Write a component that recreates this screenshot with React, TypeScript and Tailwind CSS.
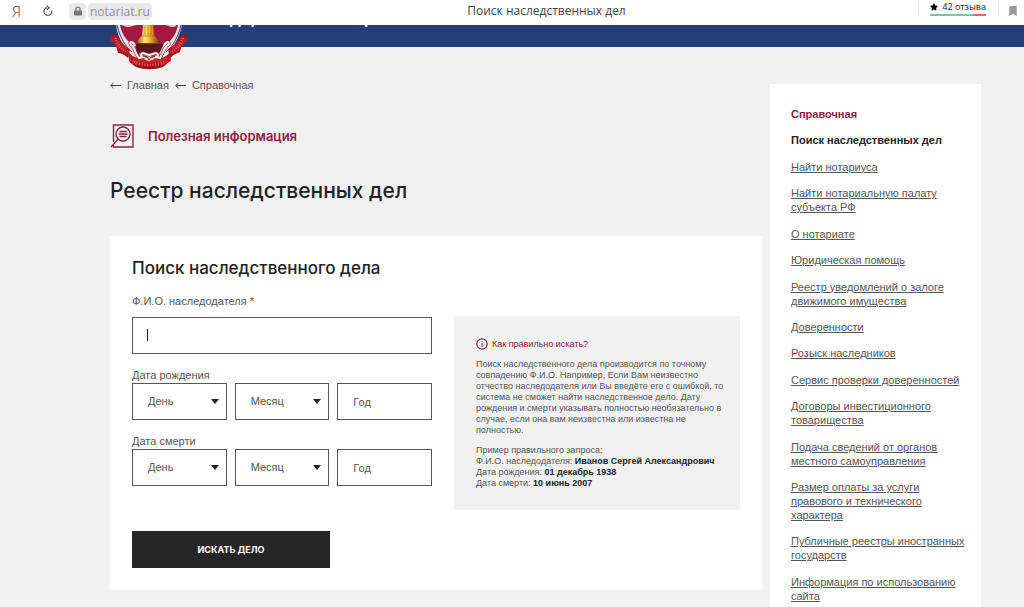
import React from 'react';
import { FaBookmark, FaLock, FaStar } from 'react-icons/fa';

interface NavItem {
  lines: string[];
}

const navItems: NavItem[] = [
  { lines: ['Найти нотариуса'] },
  { lines: ['Найти нотариальную палату', 'субъекта РФ'] },
  { lines: ['О нотариате'] },
  { lines: ['Юридическая помощь'] },
  { lines: ['Реестр уведомлений о залоге', 'движимого имущества'] },
  { lines: ['Доверенности'] },
  { lines: ['Розыск наследников'] },
  { lines: ['Сервис проверки доверенностей'] },
  { lines: ['Договоры инвестиционного', 'товарищества'] },
  { lines: ['Подача сведений от органов', 'местного самоуправления'] },
  { lines: ['Размер оплаты за услуги', 'правового и технического', 'характера'] },
  { lines: ['Публичные реестры иностранных', 'государств'] },
  { lines: ['Информация по использованию', 'сайта'] },
];

const Lines: React.FC<{ lines: string[] }> = ({ lines }) => (
  <>
    {lines.map((line, i) => (
      <React.Fragment key={line}>
        {i > 0 && <br />}
        {line}
      </React.Fragment>
    ))}
  </>
);

const Emblem: React.FC = () => (
  <svg viewBox="0 0 78 45" className="absolute left-[110px] top-0 h-[45px] w-[78px]" aria-hidden="true">
    <defs>
      <linearGradient id="gold" x1="0" x2="1">
        <stop offset="0" stopColor="#a86a10" />
        <stop offset="0.35" stopColor="#ffe87a" />
        <stop offset="0.6" stopColor="#f3b32c" />
        <stop offset="1" stopColor="#8a4c0c" />
      </linearGradient>
      <linearGradient id="ribbon" x1="0" x2="0" y1="0" y2="1">
        <stop offset="0" stopColor="#9c121c" />
        <stop offset="0.5" stopColor="#cb2029" />
        <stop offset="1" stopColor="#8f0f18" />
      </linearGradient>
    </defs>
    {/* shield */}
    <path d="M6 0C8 14 15 26 26 33H50C62 26 69 14 72 0Z" fill="#e8dde2" />
    <path d="M7 0C10 13 16 22 22 27M71 0C68 13 62 22 56 27" fill="none" stroke="#47407c" strokeWidth="1" />
    <path d="M10 0C12 10 17 17 25 21L27 29H49L53 21C61 17 66 10 68 0Z" fill="#a3193f" />
    <path d="M25 19L29 31H48L53 19Z" fill="#5f1024" />
    <path d="M12 0C16 3 21 2 26 0ZM56 0C60 2 63 3 66 1V0Z" fill="#d7cdd2" />
    {/* column */}
    <path d="M33 0H43L44 10L48 15V18H28V15L32 10Z" fill="url(#gold)" />
    <path d="M35 0V10M38 0V10M41 0V10M31 11H45" stroke="#9a5c12" strokeWidth="0.6" />
    {/* side ribbons */}
    <path d="M1 9C5 9 7 10 9 13C12 18 16 22 20 24L18 33C14 29 10 28 8 28C7 23 5 18 0 15Z" fill="url(#ribbon)" />
    <path d="M77 10C73 9 71 10 69 13C66 18 62 22 58 24L60 33C64 29 68 28 70 27C71 22 73 18 78 16Z" fill="url(#ribbon)" />
    <path d="M5 13C8 20 12 25 17 28M73 13C70 20 66 25 61 28" fill="none" stroke="#dd6a62" strokeWidth="2.4" strokeDasharray="1 1.4" />
    {/* bottom ribbon */}
    <path d="M18 27C22 31 26 33 31 34H48C53 33 57 31 60 27L61 36C57 38 56 40 53 42C44 45 35 45 26 42C23 40 20 38 19 36Z" fill="url(#ribbon)" />
    <path d="M24 37C33 41 46 41 55 37" fill="none" stroke="#dd6a62" strokeWidth="2.6" strokeDasharray="1 1.7" />
    {/* scrolls */}
    <path d="M28 32L39 36L50 32L48 27L39 30L30 27Z" fill="#f5e9df" />
    <path
      d="M25 21C23 15 18 17 21 20C25 22 25 29 29 33L33 32C30 31 31 28 33 28L39 30L46 28C48 28 49 31 46 32L50 33C53 29 54 22 58 20C61 17 56 15 54 21"
      fill="none"
      stroke="#6d2434"
      strokeWidth="3.4"
    />
    <path
      d="M25 21C23 15 18 17 21 20C25 22 25 29 29 33L33 32C30 31 31 28 33 28L39 30L46 28C48 28 49 31 46 32L50 33C53 29 54 22 58 20C61 17 56 15 54 21"
      fill="none"
      stroke="#f8e9da"
      strokeWidth="2.2"
    />
    <path d="M33 31C37 31 38 33 39 35C40 33 41 31 45 31" fill="none" stroke="#4a1822" strokeWidth="1" />
  </svg>
);

const BrowserBar: React.FC = () => (
  <div className="flex h-[25px] shrink-0 items-start bg-white font-['Open_Sans'] text-[12px] leading-[22px] text-[#444]">
    <div className="flex flex-1 items-center pl-3">
      <span className="w-[30px] text-[15px] font-light">Я</span>
      <button type="button" aria-label="Обновить" className="mr-[15px]">
        <svg viewBox="0 0 12 12" className="h-3 w-3" fill="none" stroke="#444" strokeWidth="1.1">
          <path d="M5 2.6A3.9 3.9 0 1 0 9.7 5.6" />
          <path d="M4.6 0.6L7.2 2.7L4.8 4.8" />
        </svg>
      </button>
      <span className="mr-[2px] flex h-[17px] w-[17px] items-center justify-center rounded bg-[#e9e9e9]">
        <FaLock className="h-[10px] w-2 text-[#777]" />
      </span>
      <span className="rounded bg-[#e9e9e9] px-[2px] leading-[17px] text-[#909090]">notariat.ru</span>
    </div>
    <div className="ml-16">Поиск наследственных дел</div>
    <div className="flex flex-1 items-start justify-end pr-[7px]">
      <span className="mt-1 h-3 w-px bg-[#e5e5e5]" />
      <div className="ml-[11px] mr-3 w-[56px]">
        <div className="flex h-[14px] items-center justify-between whitespace-nowrap text-[9px] leading-[14px] text-[#222]">
          <FaStar className="h-2 w-2 text-black" />
          42 отзыва
        </div>
        <div className="flex h-[2px]">
          <span className="w-[43px] bg-[#7fc59b]" />
          <span className="flex-1 bg-[#d9695f]" />
        </div>
      </div>
      <span className="mt-1 h-3 w-px bg-[#e5e5e5]" />
      <button type="button" aria-label="Добавить в закладки" className="ml-[10px] mt-[6px]">
        <FaBookmark className="h-[10px] w-2 text-[#999]" />
      </button>
    </div>
  </div>
);

const fieldClass =
  'h-[37px] w-full appearance-none rounded-none border border-[#555] bg-white px-[15px] text-[11px] text-[#555] placeholder:text-[#555] placeholder:opacity-100';

const SelectField: React.FC<{ label: string; group: string }> = ({ label, group }) => (
  <div className="relative">
    <select aria-label={`${group}: ${label}`} className={fieldClass}>
      <option>{label}</option>
    </select>
    <svg viewBox="0 0 8 5" className="pointer-events-none absolute right-2 top-4 h-[5px] w-2" fill="#222">
      <path d="M0 0H8L4 5Z" />
    </svg>
  </div>
);

const DateFields: React.FC<{ legend: string }> = ({ legend }) => (
  <fieldset className="mt-[14px]">
    <legend className="pb-px text-[11px] leading-[14px]">{legend}</legend>
    <div className="grid grid-cols-3 gap-2">
      <SelectField label="День" group={legend} />
      <SelectField label="Месяц" group={legend} />
      <input type="text" aria-label={`${legend}: Год`} placeholder="Год" className={fieldClass} />
    </div>
  </fieldset>
);

const SearchHelp: React.FC = () => (
  <div className="mt-[7px] h-[194px] min-w-0 flex-1 bg-[#f1f1f1] pl-[22px] pt-[21px] text-[9px] leading-[11px]">
    <h3 className="mb-2 flex items-center gap-1 leading-[14px] text-[#8c2340]">
      <svg viewBox="0 0 12 12" className="h-3 w-3" fill="none" stroke="#8c2340">
        <circle cx="6" cy="6" r="5.2" strokeWidth="1.2" />
        <path d="M6 3V4M6 5V9" />
      </svg>
      Как правильно искать?
    </h3>
    <p className="mb-[9px] whitespace-nowrap">
      <Lines
        lines={[
          'Поиск наследственного дела производится по точному',
          'совпадению Ф.И.О. Например, Если Вам неизвестно',
          'отчество наследодателя или Вы введёте его с ошибкой, то',
          'система не сможет найти наследственное дело. Дату',
          'рождения и смерти указывать полностью необязательно в',
          'случае, если она вам неизвестна или известна не',
          'полностью.',
        ]}
      />
    </p>
    <p className="whitespace-nowrap">
      Пример правильного запроса:
      <br />
      Ф.И.О. наследодателя: <b className="font-bold text-[#222]">Иванов Сергей Александрович</b>
      <br />
      Дата рождения: <b className="font-bold text-[#222]">01 декабрь 1938</b>
      <br />
      Дата смерти: <b className="font-bold text-[#222]">10 июнь 2007</b>
    </p>
  </div>
);

const BackArrow: React.FC = () => (
  <svg viewBox="0 0 11 7" className="h-[7px] w-[11px]" fill="none" stroke="#444">
    <path d="M0.5 3.5H11M3.5 1L0.8 3.5L3.5 6" />
  </svg>
);

const App: React.FC = () => {
  return (
    <div className="flex h-screen flex-col overflow-hidden bg-[#f1f1f1] font-['Liberation_Sans',sans-serif] text-[#555]">
      <BrowserBar />
      <header className="relative h-[22px] shrink-0 bg-[#223f77]">
        <Emblem />
        <div className="h-full overflow-hidden pl-[206px]">
          <div className="-mt-4 text-[17px] font-bold leading-5 text-white">
            Федеральная нотариальная палата
          </div>
        </div>
      </header>

      <div className="flex min-h-0 flex-1 gap-2 pl-[110px] pr-[43px]">
        <main className="min-w-0 flex-1 pt-[31px]">
          <nav className="flex items-center gap-[6px] text-[11px] leading-[14px]">
            <BackArrow />
            <a href="#">Главная</a>
            <BackArrow />
            <a href="#">Справочная</a>
          </nav>

          <div className="mt-8 flex h-6 items-center gap-[14px]">
            <svg viewBox="0 0 24 24" className="h-6 w-6" fill="none" stroke="#8c2340" strokeWidth="1.4">
              <path d="M3.5 18V1H23V23H3.5V21" />
              <circle cx="13" cy="10" r="7" />
              <path d="M8 15.2L1 23M9.5 7.5H16.5M8.5 10H17.5M9.5 12.5H16.5" />
            </svg>
            <span className="font-['Inter'] text-[13px] font-semibold leading-5 text-[#8c2340]">Полезная информация</span>
          </div>

          <h1 className="mt-7 font-['Inter'] text-[21px] font-medium leading-[30px] text-[#222]">
            Реестр наследственных дел
          </h1>

          <form className="mt-[30px] bg-white px-[22px] pb-[22px] pt-[22px]" onSubmit={(e) => e.preventDefault()}>
            <h2 className="font-['Inter'] text-[17px] font-medium leading-5 text-[#222]">Поиск наследственного дела</h2>
            <label htmlFor="fio" className="mt-[15px] block text-[11px] leading-[16px]">
              Ф.И.О. наследодателя *
            </label>
            <div className="flex gap-[22px]">
              <div className="w-[300px] shrink-0 pt-2">
                <div className="relative">
                  <input id="fio" type="text" className={fieldClass} />
                  <span className="absolute left-[15px] top-3 h-3 w-px bg-[#222]" />
                </div>
                <DateFields legend="Дата рождения" />
                <DateFields legend="Дата смерти" />
              </div>
              <SearchHelp />
            </div>
            <button type="submit" className="mt-[21px] h-[37px] w-[198px] bg-[#262626] font-['Inter'] text-[9px] font-bold text-white">
              ИСКАТЬ ДЕЛО
            </button>
          </form>
        </main>

        <aside className="mt-[37px] flex w-[211px] shrink-0 flex-col bg-white px-[21px] pb-1 pt-[23px] text-[11px] leading-[14px]">
          <ul className="flex flex-1 flex-col justify-between whitespace-nowrap">
            <li className="font-bold text-[#8c2340]">Справочная</li>
            <li className="font-bold text-[#222]">Поиск наследственных дел</li>
            {navItems.map((item) => (
              <li key={item.lines[0]}>
                <a href="#" className="underline">
                  <Lines lines={item.lines} />
                </a>
              </li>
            ))}
          </ul>
        </aside>
      </div>
    </div>
  );
};

export default App;
